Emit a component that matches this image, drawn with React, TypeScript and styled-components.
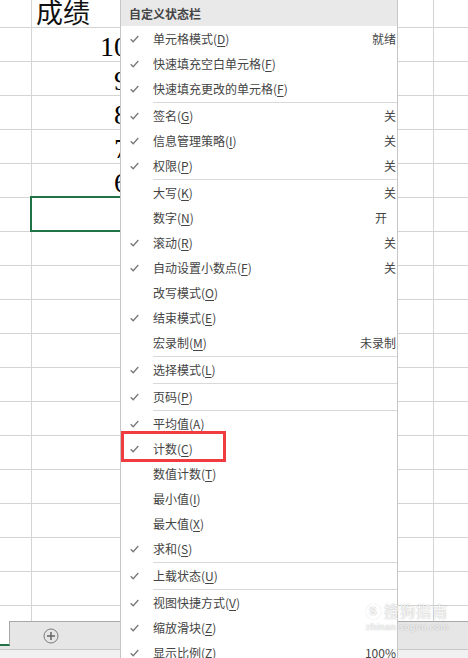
import React from "react";
import styled, { createGlobalStyle } from "styled-components";

const Global = createGlobalStyle`
  html, body { margin: 0; padding: 0; background: #fff; }
  body { width: 468px; height: 658px; overflow: hidden; }
  * { box-sizing: border-box; }
`;

const Page = styled.div`
  position: relative;
  width: 468px;
  height: 658px;
  overflow: hidden;
  background: #fff;
`;

const Sheet = styled.div`
  display: flex;
  flex-direction: column;
  height: 658px;
`;

const Grid = styled.div`
  display: grid;
  grid-template-columns: 32px 100px 302px 1fr;
  grid-template-rows: 28px repeat(17, 34px) 15px;
`;

const Cell = styled.div<{ $last?: boolean; $bottom?: boolean; $selected?: boolean }>`
  position: relative;
  border-right: ${(p) => (p.$last ? "none" : "1px solid #d4d4d4")};
  border-bottom: ${(p) => (p.$bottom ? "none" : "1px solid #d4d4d4")};
  display: flex;
  align-items: flex-end;
  ${(p) =>
    p.$selected &&
    `
    &::after {
      content: "";
      position: absolute;
      left: -2px;
      top: -2px;
      right: -1px;
      bottom: -1px;
      border: 2px solid #217346;
    }
  `}
`;

const HeaderText = styled.span`
  font-family: "Noto Sans CJK SC", sans-serif;
  font-size: 27px;
  line-height: 27px;
  color: #111;
  padding: 0 0 2px 4px;
`;

const NumberText = styled.span`
  width: 100%;
  text-align: right;
  font-family: "Liberation Serif", serif;
  font-size: 28px;
  line-height: 28px;
  color: #000;
  padding-right: 3px;
`;

const TabBar = styled.div`
  display: flex;
  align-items: stretch;
  height: 28px;
  background: #e6e6e6;
`;

const SheetTab = styled.div`
  width: 10px;
  height: 25px;
  background: #fff;
  border-right: 1px solid #a8a8a8;
  border-bottom: 2px solid #217346;
`;

const TabRest = styled.div`
  flex: 1;
  border-top: 1px solid #a8a8a8;
  display: flex;
  align-items: flex-start;
  padding: 6px 0 0 33px;
`;

const AddButton = styled.div`
  width: 16px;
  height: 16px;
  display: flex;
`;

const StatusBar = styled.div`
  flex: 1;
  background: #f1f1f1;
  border-top: 1px solid #c8c8c8;
`;

const Menu = styled.div`
  position: absolute;
  left: 120px;
  top: 0;
  width: 278px;
  height: 680px;
  background: #fff;
  border-left: 1px solid #c6c6c6;
  border-right: 1px solid #c6c6c6;
  font-family: "Noto Sans CJK SC", "Microsoft YaHei", sans-serif;
  font-size: 12px;
  color: #444;
`;

const MenuHeader = styled.div`
  height: 26px;
  background: #e9e9e9;
  display: flex;
  align-items: center;
  padding-left: 8px;
  font-weight: 700;
  color: #454545;
`;

const Item = styled.div`
  height: 25px;
  display: grid;
  grid-template-columns: 32px 1fr auto;
  align-items: center;
`;

const CheckCell = styled.div`
  padding-left: 9px;
  display: flex;
  align-items: center;
`;

const Label = styled.span`
  white-space: nowrap;
  line-height: 16px;
`;

const Key = styled.span`
  text-decoration: underline;
  text-underline-offset: 2px;
  text-decoration-thickness: 1px;
`;

const Value = styled.span<{ $inset: number }>`
  padding-right: ${(p) => p.$inset}px;
  white-space: nowrap;
  line-height: 16px;
`;

const Separator = styled.div`
  height: 1px;
  margin: 1px 0 0 32px;
  background: #d9d9d9;
`;

const Highlight = styled.div`
  position: absolute;
  left: 121px;
  top: 431px;
  width: 105px;
  height: 31px;
  border: 3px solid #f03c3e;
`;

const Watermark = styled.div`
  position: absolute;
  left: 366px;
  top: 602px;
  display: flex;
  flex-direction: column;
  gap: 2px;
  color: rgba(255, 255, 255, 0.9);
  text-shadow: 0 0 1px rgba(120, 120, 120, 0.5), 0 0 2px rgba(160, 160, 160, 0.35);
  font-family: "Noto Sans CJK SC", sans-serif;
  pointer-events: none;
`;

const WmTop = styled.div`
  display: flex;
  align-items: center;
  gap: 3px;
  font-size: 15px;
  line-height: 18px;
  letter-spacing: 1px;
`;

const WmLogo = styled.span`
  width: 15px;
  height: 15px;
  border-radius: 50%;
  border: 2px solid rgba(255, 255, 255, 0.9);
  box-shadow: 0 0 1px rgba(120, 120, 120, 0.5);
  font-size: 10px;
  line-height: 11px;
  font-weight: 700;
  text-align: center;
  font-family: "Liberation Sans", sans-serif;
`;

const WmBottom = styled.div`
  font-size: 9px;
  line-height: 10px;
  letter-spacing: 0.6px;
  font-family: "Liberation Sans", sans-serif;
`;

type MenuEntry =
  | "sep"
  | { label: string; k: string; checked?: boolean; value?: string; inset?: number };

const entries: MenuEntry[] = [
  { label: "单元格模式", k: "D", checked: true, value: "就绪" },
  { label: "快速填充空白单元格", k: "F", checked: true },
  { label: "快速填充更改的单元格", k: "F", checked: true },
  "sep",
  { label: "签名", k: "G", checked: true, value: "关" },
  { label: "信息管理策略", k: "I", checked: true, value: "关" },
  { label: "权限", k: "P", checked: true, value: "关" },
  "sep",
  { label: "大写", k: "K", value: "关" },
  { label: "数字", k: "N", value: "开", inset: 10 },
  { label: "滚动", k: "R", checked: true, value: "关" },
  { label: "自动设置小数点", k: "F", checked: true, value: "关" },
  { label: "改写模式", k: "O" },
  { label: "结束模式", k: "E", checked: true },
  { label: "宏录制", k: "M", value: "未录制" },
  "sep",
  { label: "选择模式", k: "L", checked: true },
  "sep",
  { label: "页码", k: "P", checked: true },
  "sep",
  { label: "平均值", k: "A", checked: true },
  { label: "计数", k: "C", checked: true },
  { label: "数值计数", k: "T" },
  { label: "最小值", k: "I" },
  { label: "最大值", k: "X" },
  { label: "求和", k: "S", checked: true },
  "sep",
  { label: "上载状态", k: "U", checked: true },
  "sep",
  { label: "视图快捷方式", k: "V", checked: true },
  { label: "缩放滑块", k: "Z", checked: true },
  { label: "显示比例", k: "Z", checked: true, value: "100%" },
];

const Check = () => (
  <svg width="9" height="8" viewBox="0 0 9 8">
    <polyline points="0.7,4.2 3.2,6.8 8.3,1" fill="none" stroke="#777" strokeWidth="1.3" />
  </svg>
);

const Plus = () => (
  <svg width="16" height="16" viewBox="0 0 16 16">
    <circle cx="8" cy="8" r="7" fill="none" stroke="#7b7b7b" strokeWidth="1" />
    <line x1="8" y1="4" x2="8" y2="12" stroke="#6b6b6b" strokeWidth="1.6" />
    <line x1="4" y1="8" x2="12" y2="8" stroke="#6b6b6b" strokeWidth="1.6" />
  </svg>
);

const numbers = ["10", "9", "8", "7", "6"];
const ROWS = 19;

export default function App() {
  const cells: React.ReactNode[] = [];
  for (let r = 0; r < ROWS; r++) {
    for (let c = 0; c < 4; c++) {
      let content: React.ReactNode = null;
      if (r === 0 && c === 1) content = <HeaderText>成绩</HeaderText>;
      if (r >= 1 && r <= 5 && c === 1) content = <NumberText>{numbers[r - 1]}</NumberText>;
      cells.push(
        <Cell
          key={`${r}-${c}`}
          $last={c === 3}
          $bottom={r === ROWS - 1}
          $selected={r === 6 && c === 1}
        >
          {content}
        </Cell>
      );
    }
  }

  return (
    <Page>
      <Global />
      <Sheet>
        <Grid>{cells}</Grid>
        <TabBar>
          <SheetTab />
          <TabRest>
            <AddButton>
              <Plus />
            </AddButton>
          </TabRest>
        </TabBar>
        <StatusBar />
      </Sheet>

      <Menu>
        <MenuHeader>自定义状态栏</MenuHeader>
        {entries.map((e, i) =>
          e === "sep" ? (
            <Separator key={i} />
          ) : (
            <Item key={i}>
              <CheckCell>{e.checked ? <Check /> : null}</CheckCell>
              <Label>
                {e.label}(<Key>{e.k}</Key>)
              </Label>
              <Value $inset={e.inset ?? 1}>{e.value ?? ""}</Value>
            </Item>
          )
        )}
      </Menu>

      <Highlight />

      <Watermark>
        <WmTop>
          <WmLogo>S</WmLogo>
          <span>搜狗指南</span>
        </WmTop>
        <WmBottom>zhinan.sogou.com</WmBottom>
      </Watermark>
    </Page>
  );
}
